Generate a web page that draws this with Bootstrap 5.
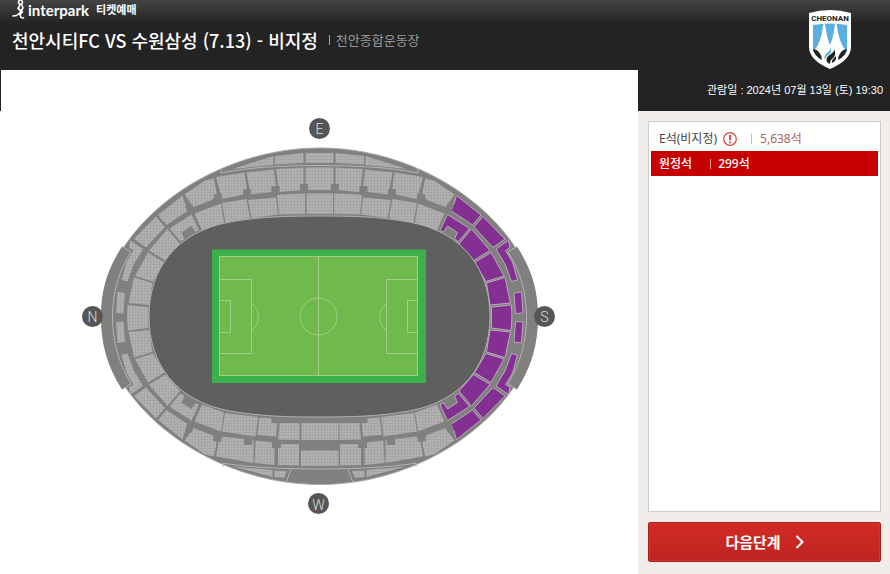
<!DOCTYPE html>
<html lang="ko">
<head>
<meta charset="utf-8">
<meta name="viewport" content="width=device-width, initial-scale=1">
<title>인터파크 티켓예매</title>
<link href="https://cdn.jsdelivr.net/npm/bootstrap@5.3.0/dist/css/bootstrap.min.css" rel="stylesheet">
<style>
  body { font-family: "Noto Sans", "Noto Sans CJK KR", sans-serif; font-size: 12px; line-height: 16px;
    background: linear-gradient(#444 0, #232323 24px, #232323 111px, #fff 111px) no-repeat #fff; }
  .top-bar { height: 70px; padding-left: 12px; color: #fff; }
  .brand-line { height: 20px; color: #fff; }
  .brand-name { font: 700 15px/20px "Lato", sans-serif; margin-left: 2px; }
  .brand-sub { font-size: 11px; font-weight: 700; margin-left: 7px; }
  .match-title { font-family: "Noto Sans CJK KR", sans-serif; font-size: 18px; font-weight: 500; line-height: 24px; }
  .match-title + .bar-sep { margin: 0 6px 0 11px; }
  .venue { font-size: 13px; color: #999; }
  .bar-sep { width: 1px; height: 10px; background: currentColor; opacity: .6; }
  .map-panel { margin-left: 1px; }
  .side { width: 252px; }
  .side-head { height: 111px; padding: 9px 7px 13px 0; color: #fff; }
  .club { margin-right: 32px; }
  .show-date { font-family: "Liberation Sans", "Noto Sans CJK KR", sans-serif; font-size: 11px; }
  .side-body { background: #f0edeb; padding: 10px 9px 12px 10px; gap: 10px; }
  .grade-box { border: 1px solid #ccc; padding: 4px 2px 2px; }
  .grade { height: 25px; padding: 0 8px; border: 0; background: #fff; color: #444; text-align: left; }
  .grade .count { color: #a86464; margin-left: 8px; }
  .grade.chosen { background: #c60000; color: #fff; font-weight: 500; }
  .grade.chosen .count { color: #fff; margin-left: 7px; }
  .grade .alert-mark { margin-left: 6px; }
  .grade .bar-sep { margin-left: 14px; color: #999; }
  .grade.chosen .bar-sep { margin-left: 18px; color: #fff; }
  .next-btn { height: 40px; border: 1px solid #a91f1c; border-radius: 2px; color: #fff; font-size: 15px; font-weight: 700;
    background: linear-gradient(#d32a27, #bd2520); box-shadow: inset 0 0 0 1px #cf3530; gap: 14px; }
  .stand { fill: #80807e; }
  .seat { fill: url(#seats); }
  .away { fill: #842f92; stroke: #b9a9bb; stroke-width: 1; }
  .edge { fill: none; stroke: #b4b4b2; }
  .chalk { fill: none; stroke: #a0d084; }
  .compass circle { fill: #565656; }
  .compass text { fill: #ddd; font: 300 14px "Roboto", sans-serif; text-anchor: middle; }
</style>
<script src="https://cdn.jsdelivr.net/npm/bootstrap@5.3.0/dist/js/bootstrap.bundle.min.js"></script>
</head>
<body class="d-flex min-vh-100">
<main class="flex-grow-1 d-flex flex-column">
  <header class="top-bar">
    <a href="#" class="brand-line d-flex align-items-center text-decoration-none">
      <svg width="14" height="20" viewBox="0 0 14 20" fill="none" stroke="#fff" stroke-width="1.6" stroke-linecap="round" stroke-linejoin="round" aria-hidden="true">
        <circle cx="8.5" cy="2.3" r="2"/><path d="M8 5 6 8.500 10.500 12 8 14.500 9 17.500 11.500 18M10 5.500 11 8 7 14M7 13.500 4.500 15.500 1 16"/>
      </svg>
      <span class="brand-name">interpark</span><span class="brand-sub">티켓예매</span>
    </a>
    <div class="d-flex align-items-center pt-2">
      <h1 class="match-title m-0">천안시티FC VS 수원삼성 (7.13) - 비지정</h1>
      <span class="bar-sep"></span>
      <span class="venue">천안종합운동장</span>
    </div>
  </header>
  <section class="map-panel bg-white flex-grow-1" aria-label="좌석도">
    <svg class="d-block w-100" viewBox="1 70 637 504">
      <defs>
        <pattern id="seats" width="3" height="3" patternUnits="userSpaceOnUse">
          <rect width="3" height="3" fill="#b3b1b1"/><path d="M0 .5H3M.5 0V3" stroke="#a7a5a5" stroke-width="1"/>
        </pattern>
        <!-- upper end of the bowl, shared by all four corners -->
        <g id="corner">
          <path d="M128.500 303 149 305 152.500 283 134 277.500Z"/>
          <path d="M135 276 153 281.500 164.500 262.500 148 252.500Z"/>
          <path d="M149 250.500 165.500 260.500 180 244 167.500 229Z"/>
          <path d="M191.500 214.500 169.500 228.500 180.500 241.500 184.500 239 181.500 232.500 191.500 226 195.500 232 199 230.500Z"/>
          <path d="M117.500 292 125 293 123.500 313.500 116 313Z"/>
          <path d="M130.500 240.500 143 249 134 264 127.500 281.500 121.500 280 126.500 262 133.500 250.500 129 247.500Z"/>
          <path d="M156 216.500 134 239 146 247.500 165 227Z"/>
          <path d="M182.500 195.500 158 215 166.500 225 187.500 211 188 206 185 204Z"/>
        </g>
        <g id="flank">
          <path d="M194.500 213.500 221 203.500 224 222.500 202 230.500Z"/>
          <path d="M184.500 194.500 205 180.500 214 178.500 217 195 212 200 193.500 207Z"/>
        </g>
        <g id="east">
          <path d="M222 203 246.500 199 250 218 225.500 222.500Z"/>
          <path d="M248 200 276 197.500 278 214.500 251.500 218Z"/>
          <path d="M277 194.500 305 193.500V214L279 214.500Z"/>
          <path d="M216 177 244.500 172.500 247 190 242 195 222 199Z"/>
          <path d="M246.500 172.500 274 169.500 276 187 272 192 250.500 194.500Z"/>
          <path d="M276 169 303.500 167.500V190L279 192Z"/>
          <path d="M232 169 273.500 156V165Z"/>
          <path d="M275 156 303.500 153V163L275 164.500Z"/>
        </g>
        <g id="west">
          <path d="M225 413 258 417 255.500 436.500 222 431.500Z"/>
          <path d="M259.500 417.500 271.500 418.500V423H277.500L276 436.500 257 435Z"/>
          <path d="M279.500 423H299.500V440L278 439.500Z"/>
          <path d="M222 436.500 253.500 440V463L216 456.500 218.500 442Z"/>
          <path d="M255.500 440.500 272 442.500 274.500 448V465L254.500 463Z"/>
          <path d="M281 444H299V465.500L278 465V448Z"/>
          <path d="M233 466.500 272.500 470V477Z"/>
          <path d="M274.500 470.500 287 471 284 478 274.500 477Z"/>
        </g>
        <path id="tribune" d="M122 246.500C107 270 101 290 101 317 101 344 107 366 122 389.500L130.500 384C118 362 112.500 340 112.500 317 112.500 294 118 272 130.500 251.500Z"/>
        <g id="posts">
          <path d="M300 184h8v9h-8zM271.500 186h8v9h-8zM243 189h8v9h-8zM213.500 194.500l8-1 1 8-8 1zM185 206l6-3 4 7-7 3z"/>
        </g>
      </defs>

      <path class="stand" stroke="#a8a8a6" d="M320 148C205 148 101.500 232 101.500 316S205 484.500 320 484.500 537.500 400 537.500 316 434 148 320 148Z"/>
      <use href="#tribune" class="stand"/>
      <use href="#tribune" class="stand" transform="translate(639 0) scale(-1 1)"/>
      <g id="rim" class="edge">
        <path d="M122 246.500 131 252C118 272 112.500 294 112.500 317S118 362 131 384L122 389.500"/>
        <path d="M221 168V173C250 167 285 165.500 320 165.500M223 467V463C245 467 280 469 320 469M291 469.500 286 482.500"/>
      </g>
      <use href="#rim" transform="translate(639 0) scale(-1 1)"/>

      <g class="seat">
        <use href="#corner"/><use href="#flank"/>
        <use href="#corner" transform="translate(0 635) scale(1 -1)"/>
        <use href="#flank" transform="translate(0 635) scale(1 -1)"/>
        <use href="#flank" transform="translate(639 0) scale(-1 1)"/>
        <use href="#flank" transform="translate(639 635) scale(-1 -1)"/>
        <use href="#east"/><use href="#east" transform="translate(639 0) scale(-1 1)"/>
        <use href="#west"/><use href="#west" transform="translate(639 0) scale(-1 1)"/>
        <path d="M127.500 305 148.500 307V328L128 330.500C127 322 127 313 127.500 305ZM306.500 193.500H333V214H306.500ZM305.500 167.500H333.500V190H305.500ZM305.500 153H333.500V163H305.500ZM301.500 423H338.500V440H301.500ZM301 450.500H338.500V466H301Z"/>
      </g>
      <g class="away">
        <use href="#corner" transform="translate(639 0) scale(-1 1)"/>
        <use href="#corner" transform="translate(639 635) scale(-1 -1)"/>
        <path d="M511.500 305 491.500 307V328L511 330.500C512 322 512 313 511.500 305Z"/>
      </g>
      <g class="stand">
        <use href="#posts"/><use href="#posts" transform="translate(639 0) scale(-1 1)"/>
        <path d="M185 430 191 433 195 425 188 422ZM214 433l8 1-1 8-8-1zM244 438h8v7h-8zM272 440h9v8h-9zM454 430 448 433 444 425 451 422ZM425 433l-8 1 1 8 8-1zM395 438h-8v7h8zM367 440h-9v8h9z"/>
      </g>

      <path fill="#5f5f5f" stroke="#b0b0ae" d="M149 316.500C149 270 175 232 230 222 260 216.500 290 216 320 216S379 216.500 409 222C464 232 490 270 490 316.500S464 401 409 411C379 416.500 350 417 320 417S260 416.500 230 411C175 401 149 363 149 316.500Z"/>
      <rect x="212" y="249.500" width="214" height="133.500" fill="#3cb04a"/>
      <rect x="219.500" y="256.500" width="198" height="119" fill="#6fb94d"/>
      <g class="chalk">
        <rect x="219.500" y="256.500" width="198" height="119"/>
        <path d="M318.500 256.500V375.500M219.500 279.500H251.500V353.500H219.500M219.500 300.500H230.500V332.500H219.500M417.500 279.500H386.500V353.500H417.500M417.500 300.500H407.500V332.500H417.500M251.500 304C260.500 308 260.500 326 251.500 330M386.500 304C377.500 308 377.500 326 386.500 330"/>
        <circle cx="318.500" cy="316.500" r="18.500"/>
      </g>
      <g class="compass">
        <circle cx="319.500" cy="128.500" r="10.500"/><text x="319.500" y="133.500">E</text>
        <circle cx="92.500" cy="316.500" r="10.500"/><text x="92.500" y="321.500">N</text>
        <circle cx="544.500" cy="316.500" r="10.500"/><text x="544.500" y="321.500">S</text>
        <circle cx="318.500" cy="503.500" r="10.500"/><text x="318.500" y="509.500">W</text>
      </g>
    </svg>
  </section>
</main>

<aside class="side flex-shrink-0 d-flex flex-column">
  <div class="side-head d-flex flex-column justify-content-between align-items-end">
    <svg class="club" width="42" height="60" viewBox="0 0 42 60" role="img" aria-label="CHEONAN">
      <path fill="#fff" d="M0 4Q21-2 42 4V38Q42 51 21 60 0 51 0 38Z"/>
      <path fill="#5aafe0" d="M4 16Q21 13 38 16V42L32 47 21 42 10 47 4 42Z"/>
      <path fill="#fff" d="M5 42Q12 34 14.500 15H16Q18 30 21 36 24 30 26 15H27.500Q30 34 37 42L31 51 21 46 11 51Z"/>
      <path fill="#222" d="M4 40Q12 41 13 51 5 47 4 40ZM38 40Q30 41 29 51 37 47 38 40ZM18 53Q16 48 22 45 26 42 25 40 28 45 24 49 21 51 21 55ZM23 54Q22 51 27 47 28 52 23 54Z"/>
      <path fill="#5aafe0" d="M16 51Q14 47 19 43 22 41 21 38 24 43 19 46 16 48 16 51Z"/>
      <text x="21" y="12" text-anchor="middle" font-family="Roboto, sans-serif" font-size="8" font-weight="700" fill="#222">CHEONAN</text>
    </svg>
    <div class="show-date">관람일 : 2024년 07월 13일 (토) 19:30</div>
  </div>
  <div class="side-body flex-grow-1 d-flex flex-column">
    <div class="grade-box bg-white flex-grow-1 d-flex flex-column">
      <button type="button" class="grade d-flex align-items-center w-100">
        <span>E석(비지정)</span>
        <svg class="alert-mark" width="14" height="14" viewBox="0 0 14 14" fill="none" stroke="#d2453f" aria-hidden="true"><circle cx="7" cy="7" r="6.300" stroke-width="1.200"/><path d="M7 3V8.300M7 9.500V11.200" stroke-width="1.800"/></svg>
        <span class="bar-sep"></span><span class="count">5,638석</span>
      </button>
      <button type="button" class="grade chosen d-flex align-items-center w-100">
        <span>원정석</span><span class="bar-sep"></span><span class="count">299석</span>
      </button>
    </div>
    <button type="button" class="next-btn d-flex align-items-center justify-content-center w-100">
      <span>다음단계</span>
      <svg width="9" height="14" viewBox="0 0 9 14" fill="none" stroke="#fff" stroke-width="2" aria-hidden="true"><path d="M1.500 1 7.500 7 1.500 13"/></svg>
    </button>
  </div>
</aside>
</body>
</html>
